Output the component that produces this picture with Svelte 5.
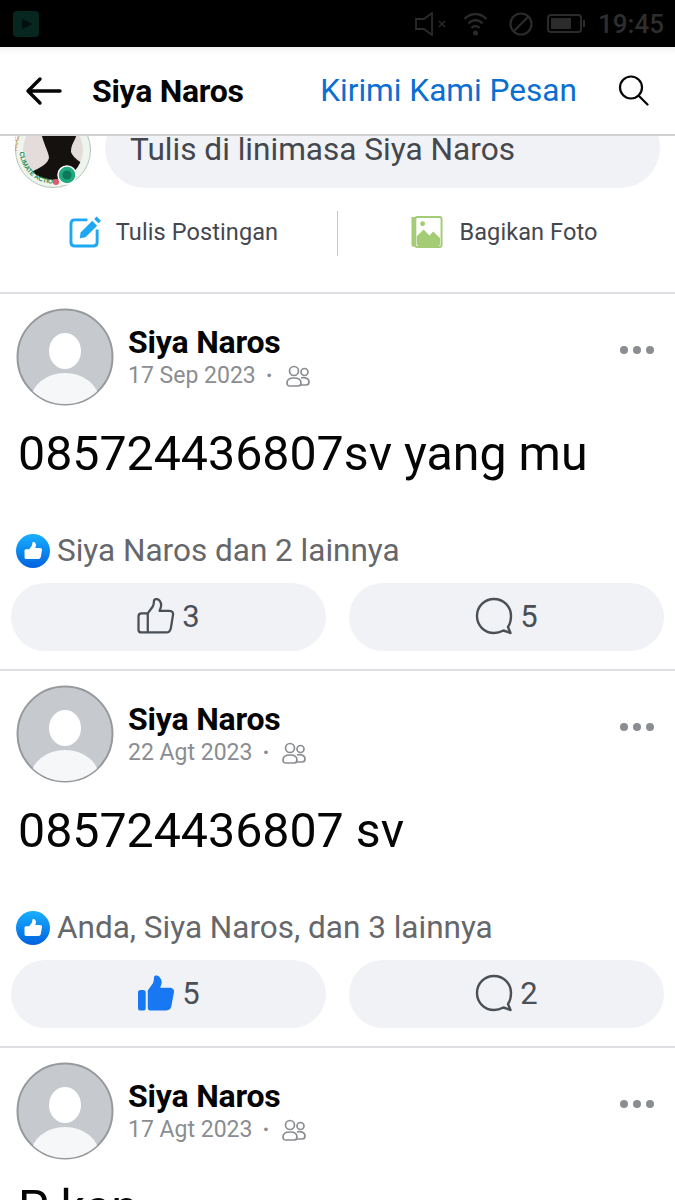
<script>
	const posts = [
		{ date: '17 Sep 2023', body: '085724436807sv yang mu', likes: 'Siya Naros dan 2 lainnya', likeCount: 3, comments: 5, liked: false },
		{ date: '22 Agt 2023', body: '085724436807 sv', likes: 'Anda, Siya Naros, dan 3 lainnya', likeCount: 5, comments: 2, liked: true },
		{ date: '17 Agt 2023', body: 'P kan', likes: '', likeCount: 0, comments: 0, liked: false }
	];

	const thumbPath =
		'M10 15 L15 8 C16 6 16 4 16 3 C16 1.5 17 1 18.5 1 C21 1 23 4 23 7 C23 9 22 11 21.5 12.5 L31 12.5 C34 12.5 35 14.5 34.5 16.5 L32.5 29 C32 32 30.5 33.5 28 33.5 L4 33.5 C2 33.5 1 32.5 1 31 L1 18 C1 16 2 15 4 15 Z M10 15 V33.5';
</script>

<div class="page">
	<div class="status">
		<svg class="app-icon" width="26" height="26" viewBox="0 0 26 26">
			<rect width="26" height="26" rx="4" fill="#06261f" />
			<path d="M9 7.5 L19 13 L9 18.5 Z" fill="#020f0c" />
		</svg>
		<div class="status-right">
			<svg width="32" height="24" viewBox="0 0 32 24" fill="none" stroke="#2b2b2b" stroke-width="1.8">
				<path d="M1 7 H9 L17 1 V23 L9 17 H1 Z" />
				<path d="M24 9 L30 15 M30 9 L24 15" stroke-width="1.4" />
			</svg>
			<svg width="27" height="24" viewBox="0 0 24 24" fill="none" stroke="#2b2b2b" stroke-width="2.2" class="wifi">
				<path d="M1 7 C7 0.5 17 0.5 23 7" />
				<path d="M5 11.5 C9 7 15 7 19 11.5" />
				<path d="M8 16 C10 13.5 14 13.5 16 16" />
				<circle cx="12" cy="21" r="2.5" fill="#2b2b2b" stroke="none" />
			</svg>
			<svg width="24" height="24" viewBox="0 0 24 24" fill="none" stroke="#2b2b2b" stroke-width="2.2" class="dnd">
				<circle cx="12" cy="12" r="10.5" />
				<path d="M5 19 L19 5" />
			</svg>
			<svg width="38" height="19" viewBox="0 0 38 19" class="battery">
				<rect x="1" y="1" width="33" height="17" rx="3" fill="none" stroke="#2b2b2b" stroke-width="2" />
				<rect x="4" y="4" width="20" height="11" fill="#2b2b2b" />
				<rect x="36" y="6" width="2" height="7" fill="#2b2b2b" />
			</svg>
			<span class="time">19:45</span>
		</div>
	</div>

	<header class="topbar">
		<svg class="back" width="38" height="30" viewBox="0 0 38 30" fill="none" stroke="#050505" stroke-width="3.4" stroke-linecap="round" stroke-linejoin="round">
			<path d="M35 15 H3 M15 3 L3 15 L15 27" />
		</svg>
		<span class="title">Siya Naros</span>
		<span class="message">Kirimi Kami Pesan</span>
		<svg class="search" width="31" height="31" viewBox="0 0 31 31" fill="none" stroke="#050505" stroke-width="2.2" stroke-linecap="round">
			<circle cx="13" cy="12.5" r="11" />
			<path d="M21 21 L29.5 29.5" />
		</svg>
	</header>

	<section class="composer">
		<div class="write-row">
			<svg class="page-avatar" width="76" height="76" viewBox="0 0 76 76">
				<defs>
					<path id="ring-bottom" d="M4.5 38 A33.5 33.5 0 0 0 71.5 38" />
					<path id="ring-top" d="M5 52 A35 35 0 0 1 14 12" />
					<clipPath id="inner"><circle cx="38" cy="38" r="30" /></clipPath>
				</defs>
				<circle cx="38" cy="38" r="37.5" fill="#eef5ee" stroke="#b5c4b8" />
				<circle cx="38" cy="38" r="30" fill="#e3dcda" />
				<g clip-path="url(#inner)">
					<path d="M24 0 H62 V18 C62 28 56 30 56 40 C58 46 66 50 70 54 L66 76 H12 L14 62 C22 56 32 54 34 46 C34 38 24 28 24 0 Z" fill="#15110f" />
				</g>
				<text class="ring-text"><textPath href="#ring-bottom" startOffset="2%">CLIMATE ACTION</textPath></text>
				<text class="ring-orange"><textPath href="#ring-top" startOffset="30%">ACCI</textPath></text>
				<circle cx="52" cy="63" r="9" fill="#1fa97d" stroke="#ffffff" stroke-width="1.5" />
				<circle cx="52" cy="63" r="4.5" fill="#0c7a5a" />
				<circle cx="41" cy="70" r="3" fill="#e2566f" />
			</svg>
			<div class="write-pill">Tulis di linimasa Siya Naros</div>
		</div>
		<div class="share-row">
			<div class="share write">
				<svg width="33" height="32" viewBox="0 0 34 33" fill="none">
					<path d="M19 4 H6 C3.5 4 2 5.5 2 8 V27 C2 29.5 3.5 31 6 31 H25 C27.5 31 29 29.5 29 27 V14" stroke="#1ea7f2" stroke-width="3" />
					<path d="M11 23 L12 17 L24 5 L29 10 L17 22 Z" fill="#1ea7f2" />
					<path d="M26 3 L28.5 0.5 L33 5 L30.5 7.5 Z" fill="#1ea7f2" />
				</svg>
				<span>Tulis Postingan</span>
			</div>
			<div class="share-sep"></div>
			<div class="share photo">
				<svg width="33" height="32" viewBox="0 0 34 33">
					<path d="M5 1 H1.5 V30 C1.5 31.5 3 32 5 32 Z" fill="#a3cc74" />
					<rect x="5.5" y="1" width="27" height="31" rx="2" fill="#fff" stroke="#a3cc74" stroke-width="2" />
					<path d="M7 29 V21 L14 14 L20 20 L24 16 L31 23 V29 C31 30 30 31 29 31 H9 C8 31 7 30 7 29 Z" fill="#a3cc74" />
					<circle cx="13" cy="8" r="2.5" fill="#a3cc74" />
				</svg>
				<span>Bagikan Foto</span>
			</div>
		</div>
	</section>

	{#each posts as post}
		<article class="post">
			<div class="post-head">
				<svg class="avatar" width="98" height="98" viewBox="0 0 98 98">
					<defs>
						<clipPath id="face"><circle cx="49" cy="49" r="47" /></clipPath>
					</defs>
					<circle cx="49" cy="49" r="47.5" fill="#c6c9ce" stroke="#979a9d" stroke-width="2" />
					<g clip-path="url(#face)">
						<ellipse cx="49" cy="43" rx="16" ry="18" fill="#fff" />
						<ellipse cx="49" cy="92" rx="34" ry="27" fill="#f6f7f8" />
					</g>
				</svg>
				<div class="meta">
					<div class="name">Siya Naros</div>
					<div class="date">
						<span>{post.date}</span>
						<span class="dot">·</span>
						<svg width="24" height="22" viewBox="0 0 24 22" fill="none" stroke="#8a8d91" stroke-width="1.7">
							<circle cx="8" cy="6" r="4.5" />
							<circle cx="18.5" cy="7" r="3.5" />
							<path d="M1 18 C1 14.5 4 13 8 13 C12 13 15 14.5 15 18 C15 20 14 21 12 21 H4 C2 21 1 20 1 18 Z" />
							<path d="M15 13 C19 12 23 13.5 23 17 C23 19 22 20 20 20 H15" />
						</svg>
					</div>
				</div>
				<div class="more"><i></i><i></i><i></i></div>
			</div>
			<p class="body">{post.body}</p>
			{#if post.likes}
				<div class="likes">
					<svg width="34" height="34" viewBox="0 0 34 34">
						<defs>
							<linearGradient id="badge" x1="0" y1="0" x2="0" y2="1">
								<stop offset="0" stop-color="#18afff" />
								<stop offset="1" stop-color="#0062df" />
							</linearGradient>
						</defs>
						<circle cx="17" cy="17" r="17" fill="url(#badge)" />
						<g transform="translate(8 7.5) scale(0.52)">
							<path d={thumbPath} fill="#fff" />
						</g>
					</svg>
					<span>{post.likes}</span>
				</div>
				<div class="actions">
					<button class="action">
						<svg width="38" height="36" viewBox="0 0 36 35" fill={post.liked ? '#1877f2' : 'none'} stroke={post.liked ? 'none' : '#4b4f56'} stroke-width="2.2">
							{#if post.liked}
								<rect x="0.5" y="14.5" width="7.5" height="20" rx="2.5" />
								<path d="M10 15 L15 8 C16 6 16 4 16 3 C16 1 17 0.5 18.5 0.5 C21 0.5 23.5 4 23.5 7 C23.5 9 22.5 11 22 12.5 L31 12.5 C34 12.5 36 14.5 35.5 16.5 L33 30 C32.5 33 31 34.5 28 34.5 H13 C11 34.5 10 33.5 10 32 Z" />
							{:else}
								<path d={thumbPath} stroke-linejoin="round" />
							{/if}
						</svg>
						<span>{post.likeCount}</span>
					</button>
					<button class="action">
						<svg width="38" height="38" viewBox="0 0 38 38" fill="none" stroke="#4b4f56" stroke-width="2.4" stroke-linejoin="round">
							<path d="M19 2 C28.5 2 36 9.5 36 19 C36 23.5 35 27 33 30 L35.5 36 L28.5 33.5 C25.5 35 22.5 36 19 36 C9.5 36 2 28.5 2 19 C2 9.5 9.5 2 19 2 Z" />
						</svg>
						<span>{post.comments}</span>
					</button>
				</div>
			{/if}
		</article>
	{/each}
</div>

<style>
	:global(body) {
		margin: 0;
		background: #fff;
	}

	.page {
		width: 675px;
		height: 1200px;
		overflow: hidden;
		font-family: Roboto, 'Liberation Sans', sans-serif;
		color: #050505;
		background: #fff;
	}

	.status {
		height: 47px;
		background: #000;
		display: flex;
		align-items: center;
		justify-content: space-between;
		padding: 0 11px 0 13px;
		box-sizing: border-box;
	}

	.status-right {
		display: flex;
		align-items: center;
	}

	.wifi {
		margin-left: 15px;
	}

	.dnd {
		margin-left: 20px;
	}

	.battery {
		margin-left: 14px;
	}

	.time {
		margin-left: 13px;
		font-size: 26px;
		font-weight: 500;
		color: #2e2e2e;
	}

	.topbar {
		height: 89px;
		box-sizing: border-box;
		display: flex;
		align-items: center;
		padding: 0 26px 0 25px;
		border-bottom: 2px solid #cfd0d2;
		box-shadow: inset 0 8px 8px -8px rgba(0, 0, 0, 0.12);
	}

	.title {
		margin-left: 29px;
		font-size: 32px;
		font-weight: 700;
		letter-spacing: -0.3px;
	}

	.message {
		margin-left: auto;
		font-size: 31.6px;
		color: #0a6fd1;
	}

	.search {
		margin-left: 41px;
	}

	.composer {
		height: 156px;
		display: flex;
		flex-direction: column;
	}

	.write-row {
		height: 52px;
		overflow: hidden;
		display: flex;
		align-items: flex-end;
		padding: 0 15px;
		gap: 14px;
		flex-shrink: 0;
	}

	.page-avatar {
		flex-shrink: 0;
	}

	.ring-text {
		font-family: 'Liberation Sans', sans-serif;
		font-size: 6.5px;
		font-weight: 700;
		fill: #1f8a50;
	}

	.ring-orange {
		font-family: 'Liberation Sans', sans-serif;
		font-size: 6.5px;
		font-weight: 700;
		fill: #dc9a55;
	}

	.write-pill {
		flex: 1;
		height: 80px;
		border-radius: 40px;
		background: #f0f2f5;
		box-sizing: border-box;
		padding: 22px 25px 0;
		font-size: 31.6px;
		line-height: 40px;
		color: #44474d;
		white-space: nowrap;
	}

	.share-row {
		display: flex;
		align-items: center;
		margin-top: 23px;
		height: 45px;
	}

	.share {
		display: flex;
		align-items: center;
		justify-content: center;
		box-sizing: border-box;
		padding-bottom: 4px;
		font-size: 23.5px;
		color: #44474d;
		letter-spacing: 0.1px;
	}

	.write {
		width: 337px;
		gap: 14px;
		padding-left: 10px;
	}

	.photo {
		flex: 1;
		gap: 16px;
		padding-right: 5px;
	}

	.share-sep {
		width: 1px;
		height: 45px;
		background: #c4c6c9;
	}

	.post {
		height: 377px;
		box-sizing: border-box;
		border-top: 2px solid #dddfe2;
		padding: 14px 11px 0 11px;
	}

	.post-head {
		display: flex;
		align-items: flex-start;
		padding-left: 5px;
	}

	.avatar {
		flex-shrink: 0;
	}

	.meta {
		margin-left: 14px;
		padding-top: 15px;
	}

	.name {
		font-size: 32px;
		line-height: 39px;
		font-weight: 700;
		letter-spacing: -0.2px;
	}

	.date {
		display: flex;
		align-items: center;
		gap: 9px;
		font-size: 23px;
		line-height: 28px;
		color: #8a8d91;
	}

	.dot {
		font-weight: 700;
		margin: 0 1px;
	}

	.date svg {
		margin-left: 3px;
	}

	.more {
		margin-left: auto;
		margin-right: 10px;
		margin-top: 38px;
		display: flex;
		gap: 5px;
	}

	.more i {
		display: block;
		width: 8px;
		height: 8px;
		border-radius: 50%;
		background: #8a8d91;
	}

	.body {
		margin: 18px 0 0 7px;
		font-size: 48.3px;
		line-height: 60px;
		height: 60px;
		color: #050505;
		white-space: nowrap;
	}

	.likes {
		margin: 50px 0 0 5px;
		display: flex;
		align-items: center;
		gap: 7px;
		font-size: 31.5px;
		line-height: 34px;
		color: #65676b;
	}

	.actions {
		display: flex;
		justify-content: space-between;
		margin-top: 15px;
	}

	.action {
		width: 315px;
		height: 68px;
		border: none;
		border-radius: 34px;
		background: #f0f2f5;
		display: flex;
		align-items: center;
		justify-content: center;
		gap: 7px;
		padding: 0 0 2px;
		font-family: inherit;
		font-size: 31px;
		color: #4b4f56;
	}
</style>
